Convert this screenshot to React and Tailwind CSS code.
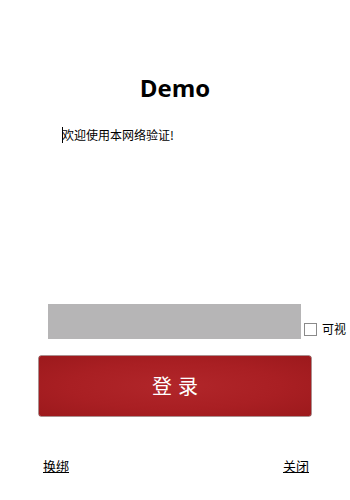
export default function App() {
  return (
    <div className="w-[350px] h-[500px] bg-white relative overflow-hidden" style={{ fontFamily: '"Noto Sans", "Noto Sans CJK SC", sans-serif' }}>
      {/* Title */}
      <div className="pt-[72px] h-[104px] flex justify-center">
        <h1 className="text-[24px] leading-[32px] font-bold text-black" style={{ fontFamily: '"Open Sans", sans-serif' }}>Demo</h1>
      </div>

      {/* Notice */}
      <div className="pl-[62px] pt-[22px] h-[200px]">
        <div className="flex items-center text-[12px] leading-[18px] text-black" style={{ fontFamily: '"Noto Sans CJK SC", sans-serif' }}>
          <span className="w-px h-[16px] bg-black -mr-px" />
          <span>欢迎使用本网络验证!</span>
        </div>
      </div>

      {/* Password row */}
      <div className="flex items-end pl-[48px]">
        <div className="w-[253px] h-[35px] bg-[#b6b5b6]" />
        <label className="flex items-center ml-[3px] mb-[2px]">
          <span className="w-[13px] h-[13px] border border-[#8a8a8a] bg-white" />
          <span className="ml-[5px] text-[12px] leading-[16px] text-black" style={{ fontFamily: '"Noto Sans CJK SC", sans-serif' }}>可视</span>
        </label>
      </div>

      {/* Login button */}
      <div className="pl-[39px] pt-[17px]">
        <button
          className="w-[272px] h-[60px] rounded-[2px] flex items-center justify-center text-white text-[20px] tracking-[6px] bg-[radial-gradient(ellipse_at_center,#b1262a_0%,#a91f23_55%,#9c191c_100%)] shadow-[0_0_0_0.5px_#5a2020]"
          style={{ fontFamily: '"Noto Sans CJK SC", sans-serif' }}
        >
          <span className="pl-[6px]">登录</span>
        </button>
      </div>

      {/* Links */}
      <div className="flex justify-between pl-[43px] pr-[41px] pt-[41px] text-[13px] leading-[18px] text-black" style={{ fontFamily: '"Noto Sans CJK SC", sans-serif' }}>
        <a className="underline">换绑</a>
        <a className="underline">关闭</a>
      </div>
    </div>
  )
}
